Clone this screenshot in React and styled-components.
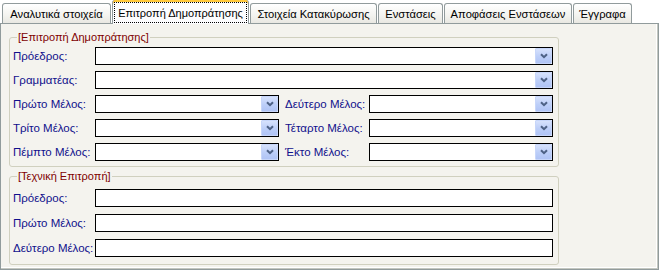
import React from "react";
import styled, { createGlobalStyle } from "styled-components";

const GlobalStyle = createGlobalStyle`
  html, body { margin: 0; padding: 0; background: #ffffff; }
  * { box-sizing: border-box; }
`;

const Root = styled.div`
  width: 659px;
  height: 270px;
  display: flex;
  flex-direction: column;
  background: #ffffff;
  font-family: Tahoma, "Liberation Sans", Arial, sans-serif;
  font-size: 11.5px;
`;

const TabBar = styled.div`
  position: relative;
  z-index: 1;
  display: flex;
  align-items: flex-end;
  gap: 1px;
  height: 23px;
  padding-left: 2px;
  font-size: 11.2px;
`;

const Tab = styled.div`
  width: ${p => p.w}px;
  height: 20px;
  display: flex;
  align-items: center;
  justify-content: center;
  color: #000;
  white-space: nowrap;
  border: 1px solid #919b9c;
  border-bottom: none;
  border-radius: 3px 3px 0 0;
  background: linear-gradient(#ffffff, #f3f3ef 60%, #e9e8e2);
`;

const ActiveTab = styled.div`
  width: ${p => p.w}px;
  height: 24px;
  margin-bottom: -1px;
  padding: 2px 1px 1px;
  display: flex;
  color: #000;
  white-space: nowrap;
  border: 1px solid #919b9c;
  border-top: none;
  border-bottom: none;
  border-radius: 3px 3px 0 0;
  background: #fcfcfe;
  box-shadow: inset 0 2px 0 #ffc83c, inset 0 1px 0 #e68b2c;
  font-size: 11px;
`;

const FocusBox = styled.div`
  flex: 1;
  display: flex;
  align-items: center;
  justify-content: center;
  border: 1px dotted #000;
`;

const Panel = styled.div`
  flex: 1;
  display: flex;
  flex-direction: column;
  gap: 3px;
  padding: 7px 0 0 8px;
  background: #f4f3ee;
  border: 1px solid #919b9c;
  box-shadow: inset -1px -1px 0 #c4c7c0, inset -2px -2px 0 #ffffff;
`;

const Group = styled.fieldset`
  width: 550px;
  margin: 0;
  padding: ${p => p.pad};
  border: 1px solid #d0d0bf;
  border-radius: 3px;
  display: flex;
  flex-direction: column;
  gap: ${p => p.gap}px;
`;

const Legend = styled.legend`
  margin-left: 4px;
  padding: 0 1px;
  color: #800000;
  font-size: 11px;
  line-height: 13px;
`;

const Row = styled.div`
  display: grid;
  grid-template-columns: 82px 184px 90px 184px;
  align-items: center;
  height: 18px;
`;

const Label = styled.span`
  color: #10108c;
  white-space: nowrap;
  padding-left: ${p => (p.inner ? 6 : 0)}px;
`;

const Box = styled.div`
  grid-column: ${p => (p.full ? "2 / 5" : "auto")};
  height: 18px;
  display: flex;
  justify-content: flex-end;
  background: #ffffff;
  border: 1px solid #000;
`;

const DropButton = styled.div`
  width: 17px;
  display: flex;
  align-items: center;
  justify-content: center;
  background: linear-gradient(#d6e1fc, #bccef8 55%, #b0c4f5);
  border: 1px solid #c7d6fa;
  border-radius: 1px;
`;

const Chevron = () => (
  <svg width="8" height="6" viewBox="0 0 8 6">
    <path d="M1 1.2 L4 4.2 L7 1.2" fill="none" stroke="#4d6185" strokeWidth="2" />
  </svg>
);

const Combo = ({ full }) => (
  <Box full={full}>
    <DropButton>
      <Chevron />
    </DropButton>
  </Box>
);

const tabs = [
  { label: "Αναλυτικά στοιχεία", w: 109 },
  { label: "Επιτροπή Δημοπράτησης", w: 137, active: true },
  { label: "Στοιχεία Κατακύρωσης", w: 127 },
  { label: "Ενστάσεις", w: 65 },
  { label: "Αποφάσεις Ενστάσεων", w: 128 },
  { label: "Έγγραφα", w: 59 },
];

const pairs = [
  ["Πρώτο Μέλος:", "Δεύτερο Μέλος:"],
  ["Τρίτο Μέλος:", "Τέταρτο Μέλος:"],
  ["Πέμπτο Μέλος:", "Έκτο Μέλος:"],
];

export default function App() {
  return (
    <Root>
      <GlobalStyle />
      <TabBar>
        {tabs.map(t =>
          t.active ? (
            <ActiveTab key={t.label} w={t.w}>
              <FocusBox>{t.label}</FocusBox>
            </ActiveTab>
          ) : (
            <Tab key={t.label} w={t.w}>{t.label}</Tab>
          )
        )}
      </TabBar>
      <Panel>
        <Group pad="3px 5px 5px 3px" gap={6}>
          <Legend>[Επιτροπή Δημοπράτησης]</Legend>
          <Row>
            <Label>Πρόεδρος:</Label>
            <Combo full />
          </Row>
          <Row>
            <Label>Γραμματέας:</Label>
            <Combo full />
          </Row>
          {pairs.map(([a, b]) => (
            <Row key={a}>
              <Label>{a}</Label>
              <Combo />
              <Label inner>{b}</Label>
              <Combo />
            </Row>
          ))}
        </Group>
        <Group pad="6px 5px 7px 3px" gap={7}>
          <Legend>[Τεχνική Επιτροπή]</Legend>
          <Row>
            <Label>Πρόεδρος:</Label>
            <Box full />
          </Row>
          <Row>
            <Label>Πρώτο Μέλος:</Label>
            <Box full />
          </Row>
          <Row>
            <Label>Δεύτερο Μέλος:</Label>
            <Box full />
          </Row>
        </Group>
      </Panel>
    </Root>
  );
}
